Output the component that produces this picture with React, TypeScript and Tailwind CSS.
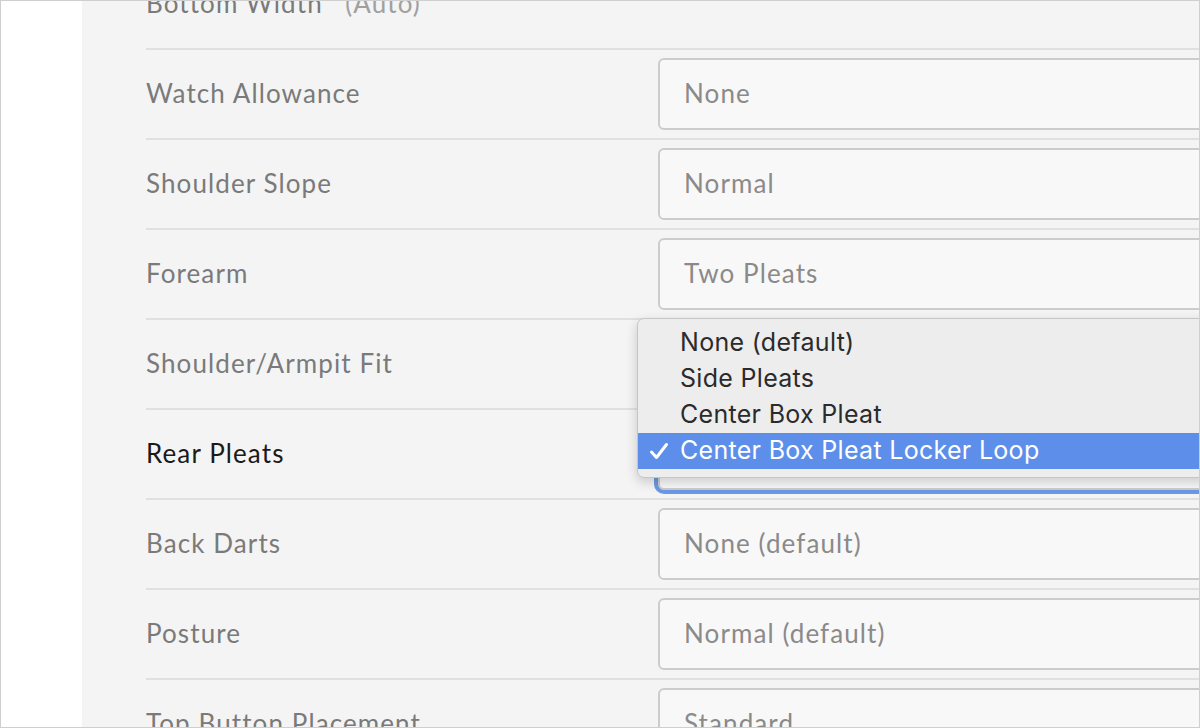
import React from 'react';

interface Field {
  label: string;
  value?: string;
  active?: boolean;
}

const fields: Field[] = [
  { label: 'Watch Allowance', value: 'None' },
  { label: 'Shoulder Slope', value: 'Normal' },
  { label: 'Forearm', value: 'Two Pleats' },
  { label: 'Shoulder/Armpit Fit', value: '' },
  { label: 'Rear Pleats', value: 'Center Box Pleat Locker Loop', active: true },
  { label: 'Back Darts', value: 'None (default)' },
  { label: 'Posture', value: 'Normal (default)' },
  { label: 'Top Button Placement', value: 'Standard' },
];

const options = ['None (default)', 'Side Pleats', 'Center Box Pleat', 'Center Box Pleat Locker Loop'];

const labelFont = { fontFamily: 'Lato, "Noto Sans", sans-serif' };
const menuFont = { fontFamily: 'Inter, Roboto, sans-serif' };

const Row: React.FC<{ field: Field }> = ({ field }) => (
  <div className="h-[90px] border-t-2 border-[#e0e0e0] flex items-center">
    <div
      className={`w-[512px] shrink-0 pb-[2px] text-[26px] tracking-[1.1px] ${field.active ? 'text-[#1a1a1a]' : 'text-[#7a7a7a]'}`}
      style={labelFont}
    >
      {field.label}
    </div>
    <div
      className={`h-[72px] w-[600px] shrink-0 rounded-[6px] border-2 border-[#cccccc] bg-[#f8f8f8] flex items-center pl-6 ${
        field.active ? 'outline-[4px] outline-solid outline-[#6b98e6]' : ''
      }`}
    >
      <span className="pb-[2px] text-[26px] tracking-[1.1px] text-[#8a8a8a]" style={labelFont}>
        {field.active ? '' : field.value}
      </span>
    </div>
  </div>
);

const App: React.FC = () => {
  return (
    <div className="w-[1200px] h-[728px] border border-[#cfcfcf] bg-white flex overflow-hidden relative">
      <div className="w-[81px] shrink-0 bg-white" />
      <div className="flex-1 bg-[#f4f4f4] pl-16 overflow-hidden">
        <div className="-mt-[41px] h-[88px] flex items-center pb-[2px]">
          <span className="text-[26px] tracking-[1.1px] text-[#7a7a7a]" style={labelFont}>
            Bottom Width"
          </span>
          <span className="ml-3 text-[26px] tracking-[1.1px] text-[#a0a0a0]" style={labelFont}>
            (Auto)
          </span>
        </div>
        {fields.map((f) => (
          <Row key={f.label} field={f} />
        ))}
      </div>

      <div
        className="absolute left-[636px] top-[317px] w-[600px] rounded-[7px] border border-[#c6c6c6] bg-[#ededee] pt-[6px] pb-[8px] shadow-[0_4px_12px_rgba(0,0,0,0.18)]"
        style={menuFont}
      >
        {options.map((o, i) => {
          const selected = i === options.length - 1;
          return (
            <div
              key={o}
              className={`h-[36px] flex items-center text-[25px] tracking-[0.3px] ${selected ? 'bg-[#5d8fea] text-white' : 'text-[#2b2b2b]'}`}
            >
              <span className="w-[42px] shrink-0 flex justify-center">
                {selected && (
                  <svg width="20" height="18" viewBox="0 0 20 18" fill="none">
                    <path d="M2.5 10 L7.5 15.5 L17.5 2.5" stroke="white" strokeWidth="3" strokeLinecap="round" strokeLinejoin="round" />
                  </svg>
                )}
              </span>
              <span>{o}</span>
            </div>
          );
        })}
      </div>
    </div>
  );
};

export default App;
